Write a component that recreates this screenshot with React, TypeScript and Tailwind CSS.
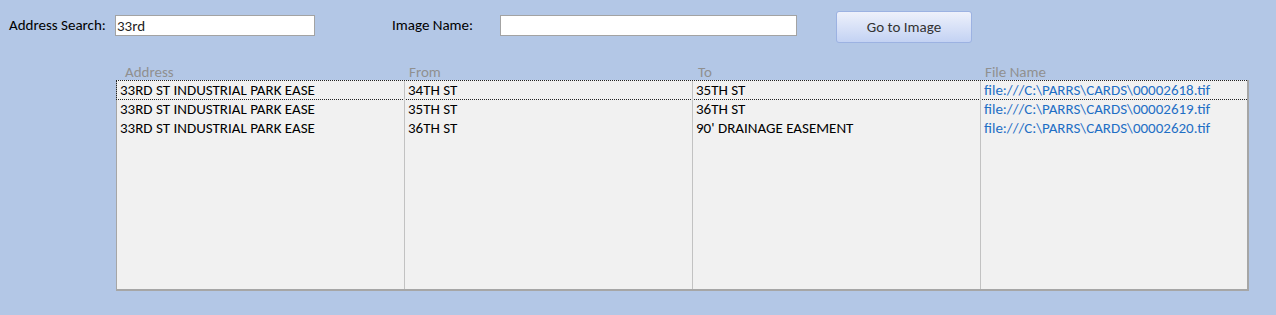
import React from 'react';

const ROWS = [
  { address: '33RD ST INDUSTRIAL PARK EASE', from: '34TH ST', to: '35TH ST', file: 'file:///C:\\PARRS\\CARDS\\00002618.tif' },
  { address: '33RD ST INDUSTRIAL PARK EASE', from: '35TH ST', to: '36TH ST', file: 'file:///C:\\PARRS\\CARDS\\00002619.tif' },
  { address: '33RD ST INDUSTRIAL PARK EASE', from: '36TH ST', to: "90' DRAINAGE EASEMENT", file: 'file:///C:\\PARRS\\CARDS\\00002620.tif' },
];

const COLS = 'grid grid-cols-[288px_288px_288px_1fr]';

const App: React.FC = () => {
  return (
    <div
      className="w-[1276px] h-[315px] bg-[#b3c7e6] text-[15px] text-black overflow-hidden"
      style={{ fontFamily: 'Calibri, Carlito, Lato, "Open Sans", sans-serif' }}
    >
      {/* search bar */}
      <div className="flex items-start h-[62px]">
        <span className="w-[106px] pl-[9px] mt-[16px] leading-[18px] whitespace-nowrap">Address Search:</span>
        <input
          readOnly
          value="33rd"
          className="ml-[9px] mt-[15px] w-[200px] h-[21px] bg-white border border-[#a3a3a3] px-[1px] text-[15px] leading-[19px] text-[#222] outline-none"
        />
        <span className="ml-[77px] w-[108px] mt-[16px] leading-[18px] whitespace-nowrap">Image Name:</span>
        <input
          readOnly
          value=""
          className="w-[297px] mt-[15px] h-[21px] bg-white border border-[#a3a3a3] outline-none"
        />
        <button className="ml-[39px] mt-[11px] w-[136px] h-[32px] rounded-[3px] border border-[#9cb2e2] bg-gradient-to-b from-[#eef1fb] to-[#c3d2f3] text-[#333] text-[15px]">
          Go to Image
        </button>
      </div>

      {/* datasheet */}
      <div className="ml-[116px] w-[1133px]">
        <div className={`${COLS} h-[18px] text-[#909090] leading-[20px]`}>
          <span className="pl-[9px]">Address</span>
          <span className="pl-[5px]">From</span>
          <span className="pl-[6px]">To</span>
          <span className="pl-[5px]">File Name</span>
        </div>
        <div className="h-[211px] flex flex-col bg-[#f1f1f1] border border-[#a6a6a6] border-t-0 border-r-2 border-b-2">
          {ROWS.map((r, i) => (
            <div
              key={i}
              className={`${COLS} h-[19.5px] leading-[19px] shrink-0 ${i === 0 ? 'border-y border-l border-dotted border-[#222] -ml-px' : ''}`}
            >
              <span className="pl-[3px] border-r border-[#c2c2c2] whitespace-nowrap">{r.address}</span>
              <span className="pl-[3px] border-r border-[#c2c2c2] whitespace-nowrap">{r.from}</span>
              <span className="pl-[3px] border-r border-[#c2c2c2] whitespace-nowrap">{r.to}</span>
              <span className="pl-[3px] text-[#1f6fc5] whitespace-nowrap">{r.file}</span>
            </div>
          ))}
          <div className={`${COLS} flex-1`}>
            <span className="border-r border-[#c2c2c2]" />
            <span className="border-r border-[#c2c2c2]" />
            <span className="border-r border-[#c2c2c2]" />
            <span />
          </div>
        </div>
      </div>
    </div>
  );
};

export default App;
